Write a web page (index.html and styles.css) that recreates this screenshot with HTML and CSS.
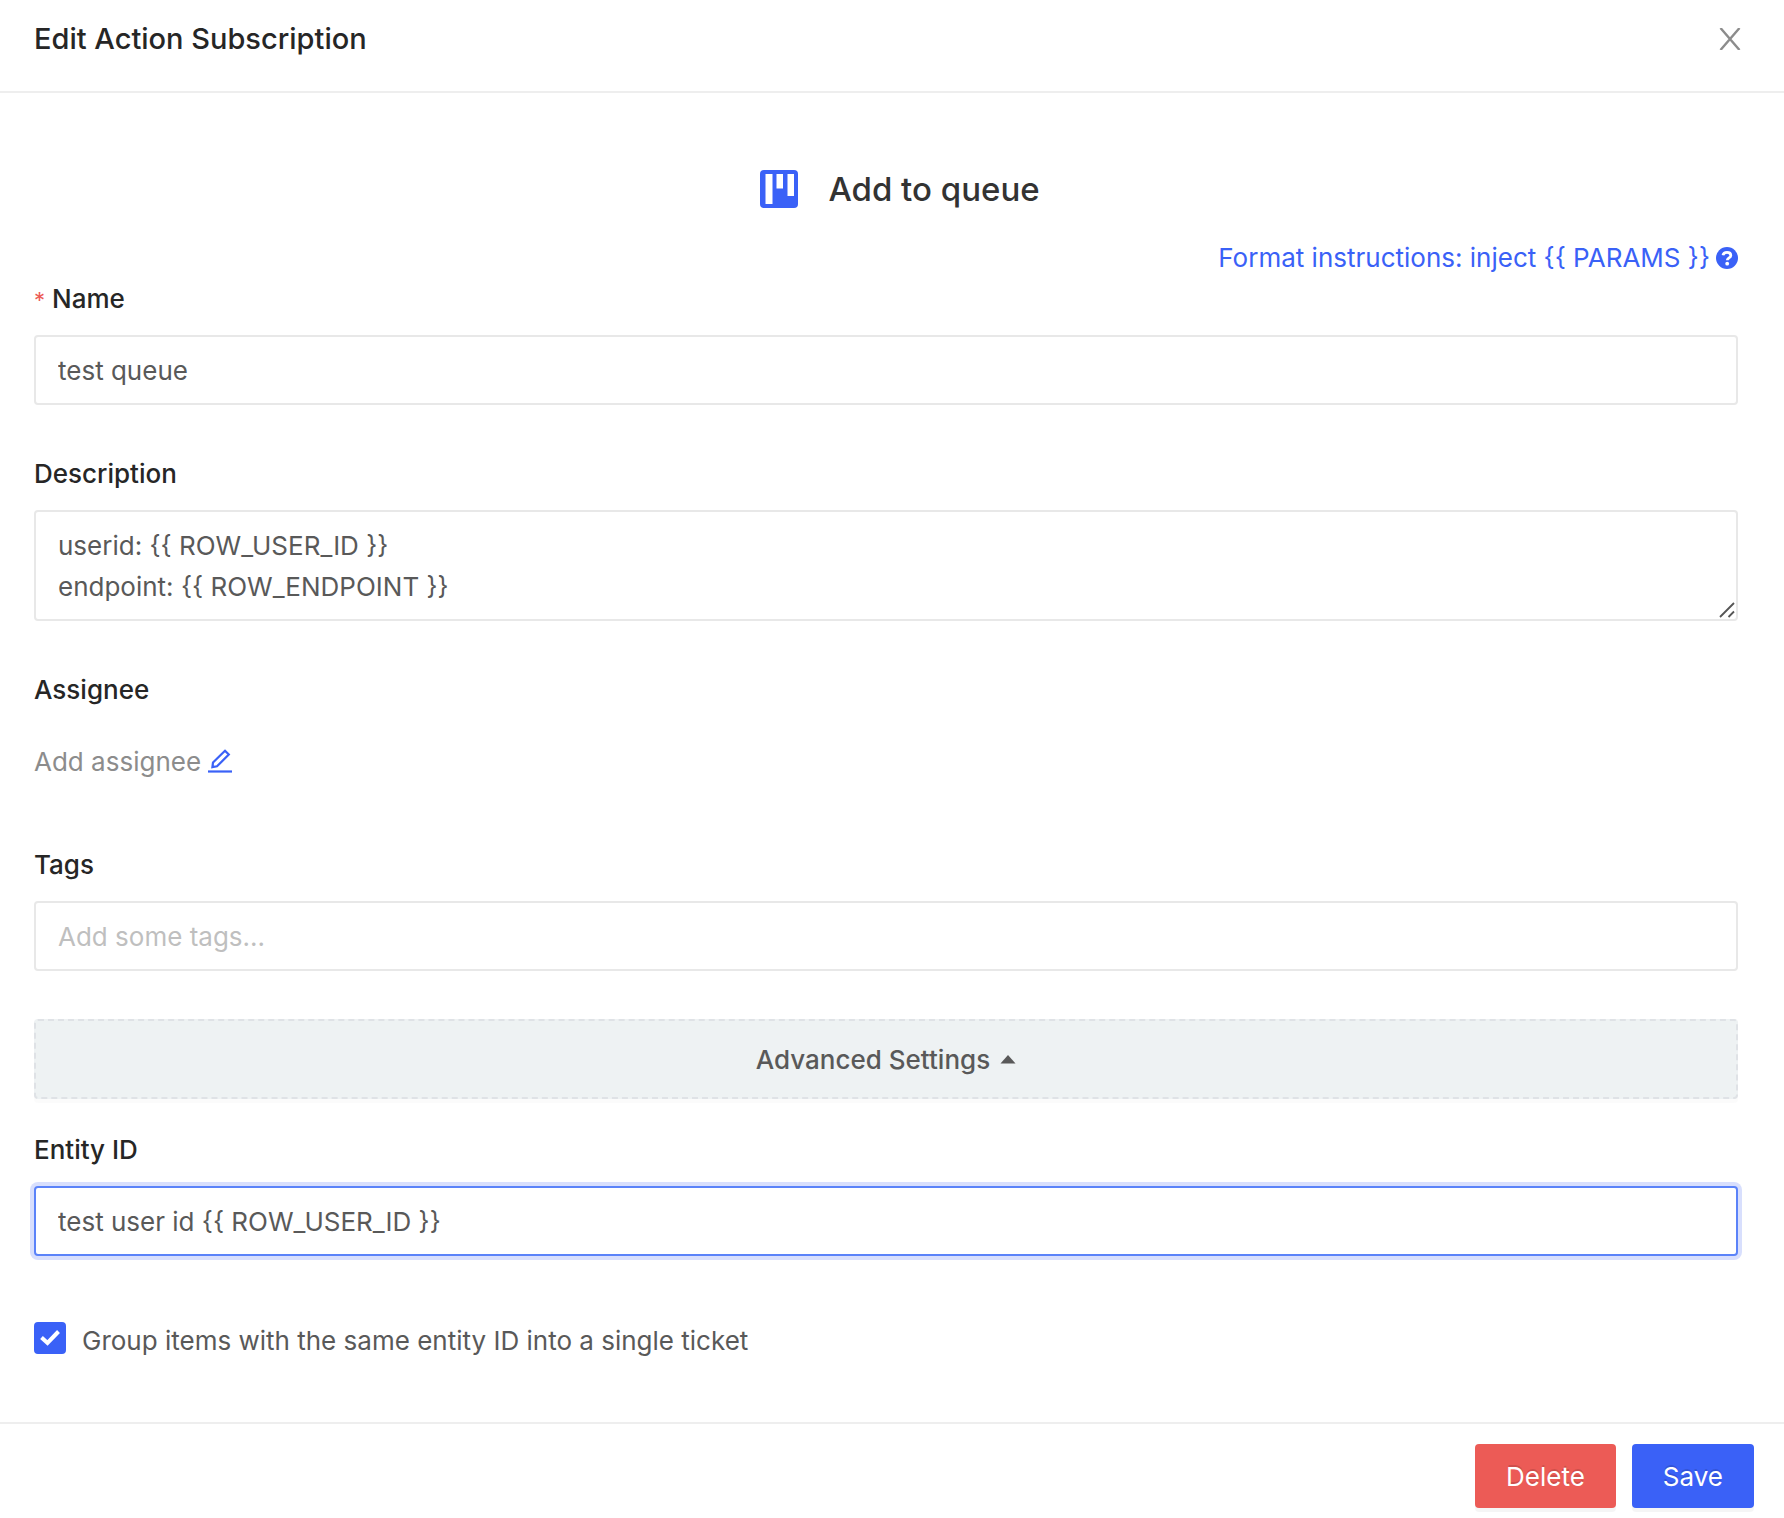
FILE: index.html
```html
<!DOCTYPE html>
<html lang="en">
<head>
<meta charset="utf-8">
<title>Edit Action Subscription</title>
<link rel="stylesheet" href="styles.css">
</head>
<body>
<form class="drawer">
  <header class="drawer-header">
    <h1 class="drawer-title">Edit Action Subscription</h1>
    <button class="close" type="button" aria-label="Close">
      <svg width="22" height="22" viewBox="0 0 22 22"><path d="M1.5 0 20.500 22M20.500 0 1.500 22" fill="none" stroke="currentColor" stroke-width="2.400"/></svg>
    </button>
  </header>

  <main class="drawer-body">
    <h2 class="action">
      <svg width="38" height="38" viewBox="0 0 38 38"><rect width="38" height="38" rx="4" fill="#3a61f7"/><path d="M5.500 4h7v30h-7zM16.500 4h6.500v14.500h-6.500zM27.500 4h6.500v22h-6.500z" fill="#fff"/></svg>
      <span>Add to queue</span>
    </h2>

    <a class="format" href="#">
      <span>Format instructions: inject {{ PARAMS }}</span>
      <svg width="22" height="22" viewBox="0 0 22 22"><circle cx="11" cy="11" r="11" fill="currentColor"/><path d="M7 8.300C7.400 6.200 9.100 5.400 11 5.400c2.200 0 3.800 1.100 3.800 3 0 2.600-3.500 2.500-3.500 4.900" fill="none" stroke="#fff" stroke-width="2.800"/><circle cx="11.200" cy="16.700" r="1.900" fill="#fff"/></svg>
    </a>

    <div class="field">
      <label class="label required" for="name">Name</label>
      <input class="input" id="name" type="text" value="test queue" required>
    </div>

    <div class="field">
      <label class="label" for="description">Description</label>
      <div class="area">
        <textarea class="input textarea" id="description" rows="2">userid: {{ ROW_USER_ID }}
endpoint: {{ ROW_ENDPOINT }}</textarea>
        <svg class="grip" width="16" height="16" viewBox="0 0 16 16"><path d="M1 15 15 1M9.500 15 15 9.500" fill="none" stroke="#555" stroke-width="1.800"/></svg>
      </div>
    </div>

    <div class="field">
      <span class="label">Assignee</span>
      <div class="assignee">
        <span>Add assignee</span>
        <button class="edit" type="button" aria-label="Edit assignee">
          <svg width="24" height="24" viewBox="0 0 24 24" fill="none" stroke="currentColor" stroke-width="2.200"><path d="M0 22.500h24"/><path d="m5 13.500L17 1.700l3.800 3.900L9 17.300l-4.600.8z"/></svg>
        </button>
      </div>
    </div>

    <div class="field">
      <label class="label" for="tags">Tags</label>
      <input class="input" id="tags" type="text" placeholder="Add some tags...">
    </div>

    <button class="advanced" type="button" aria-expanded="true">
      <span>Advanced Settings</span>
      <svg width="16" height="9" viewBox="0 0 16 9"><path d="M8 0 15.500 8.500H.5z" fill="currentColor"/></svg>
    </button>

    <div class="field entity">
      <label class="label" for="entity">Entity ID</label>
      <input class="input active" id="entity" type="text" value="test user id {{ ROW_USER_ID }}">
    </div>

    <label class="check">
      <span class="box">
        <input class="tick" type="checkbox" checked>
        <svg class="mark" width="22" height="18" viewBox="0 0 22 18"><path d="M2.500 8.500 8.500 14 19.500 2.500" fill="none" stroke="#fff" stroke-width="4"/></svg>
      </span>
      <span>Group items with the same entity ID into a single ticket</span>
    </label>
  </main>

  <footer class="drawer-footer">
    <button class="btn danger" type="button">Delete</button>
    <button class="btn primary" type="submit">Save</button>
  </footer>
</form>
</body>
</html>
```
FILE: styles.css
```css
* { box-sizing: border-box; }

body {
  margin: 0;
  background: #fff;
  color: #595959;
  font: 400 26px/41px Inter, "Liberation Sans", sans-serif;
}

button, input, textarea { font: inherit; color: inherit; }
button { cursor: pointer; }
svg { display: block; flex: none; }

.drawer {
  display: flex;
  flex-direction: column;
  min-height: 100vh;
}

.drawer-header {
  display: flex;
  align-items: center;
  justify-content: space-between;
  padding: 18px 43px 32px 34px;
  border-bottom: 2px solid #eee;
}

.drawer-title {
  margin: 0;
  color: #262626;
  font-size: 29px;
  font-weight: 500;
}

.close, .edit {
  padding: 0;
  border: 0;
  background: none;
}

.close { color: #8c8c8c; }

.drawer-body {
  flex: 1;
  display: flex;
  flex-direction: column;
  padding: 66px 46px 61px 34px;
}

.action {
  display: flex;
  align-items: center;
  justify-content: center;
  gap: 30px;
  margin: 0 0 18px;
  padding-left: 28px;
  color: #333;
  font-size: 33px;
  font-weight: 500;
  line-height: 60px;
}

.format {
  display: flex;
  align-items: center;
  align-self: flex-end;
  gap: 6px;
  color: #3a61f7;
  text-decoration: none;
}

.field {
  display: flex;
  flex-direction: column;
  gap: 16px;
  margin-bottom: 48px;
}

.label {
  color: #262626;
  font-weight: 500;
}

.required::before {
  content: "*";
  margin-right: 7px;
  color: #ec5b56;
  font-size: 22px;
  font-weight: 400;
  line-height: 1;
}

.input {
  display: block;
  width: 100%;
  height: 70px;
  padding: 0 22px;
  border: 2px solid #e8e8e8;
  border-radius: 4px;
  outline: 0;
  background: #fff;
}

.input::placeholder { color: #bfbfbf; opacity: 1; }

.input.active {
  border-color: #5b83f9;
  box-shadow: 0 0 0 4px #d8dffd;
}

.area { position: relative; }

.textarea {
  height: 111px;
  padding: 13px 22px;
  overflow: hidden;
  resize: vertical;
}

.textarea::-webkit-resizer { background: transparent; }

.grip {
  position: absolute;
  right: 3px;
  bottom: 3px;
  pointer-events: none;
}

.assignee {
  display: flex;
  align-items: center;
  gap: 7px;
  height: 70px;
  color: #8c8c8c;
}

.edit { color: #3a61f7; }

.advanced {
  display: flex;
  align-items: center;
  justify-content: center;
  gap: 10px;
  height: 80px;
  border: 2px dashed #dfe2e6;
  border-radius: 4px;
  background: #eef2f3;
  box-shadow: 0 4px 0 rgba(0, 0, 0, 0.015);
  font-weight: 500;
}

.entity { margin: 30px 0 64px; }

.check {
  display: flex;
  align-items: flex-start;
  align-self: flex-start;
  gap: 16px;
}

.box {
  display: grid;
  padding-top: 2px;
}

.tick, .mark { grid-area: 1 / 1; }

.tick {
  appearance: none;
  width: 32px;
  height: 32px;
  margin: 0;
  border-radius: 4px;
  border: 2px solid #d9d9d9;
}

.tick:checked { border-color: #3a61f7; background: #3a61f7; }

.mark { place-self: center; pointer-events: none; }

.drawer-footer {
  display: flex;
  justify-content: flex-end;
  gap: 16px;
  padding: 20px 30px 10px;
  border-top: 2px solid #eee;
}

.btn {
  height: 64px;
  padding: 0 31px;
  border: 0;
  border-radius: 4px;
  color: #fff;
  box-shadow: 0 4px 0 rgba(0, 0, 0, 0.04);
  text-shadow: 0 -2px 0 rgba(0, 0, 0, 0.12);
}

.danger { background: #ec5b56; }
.primary { background: #3a61f7; }
```
